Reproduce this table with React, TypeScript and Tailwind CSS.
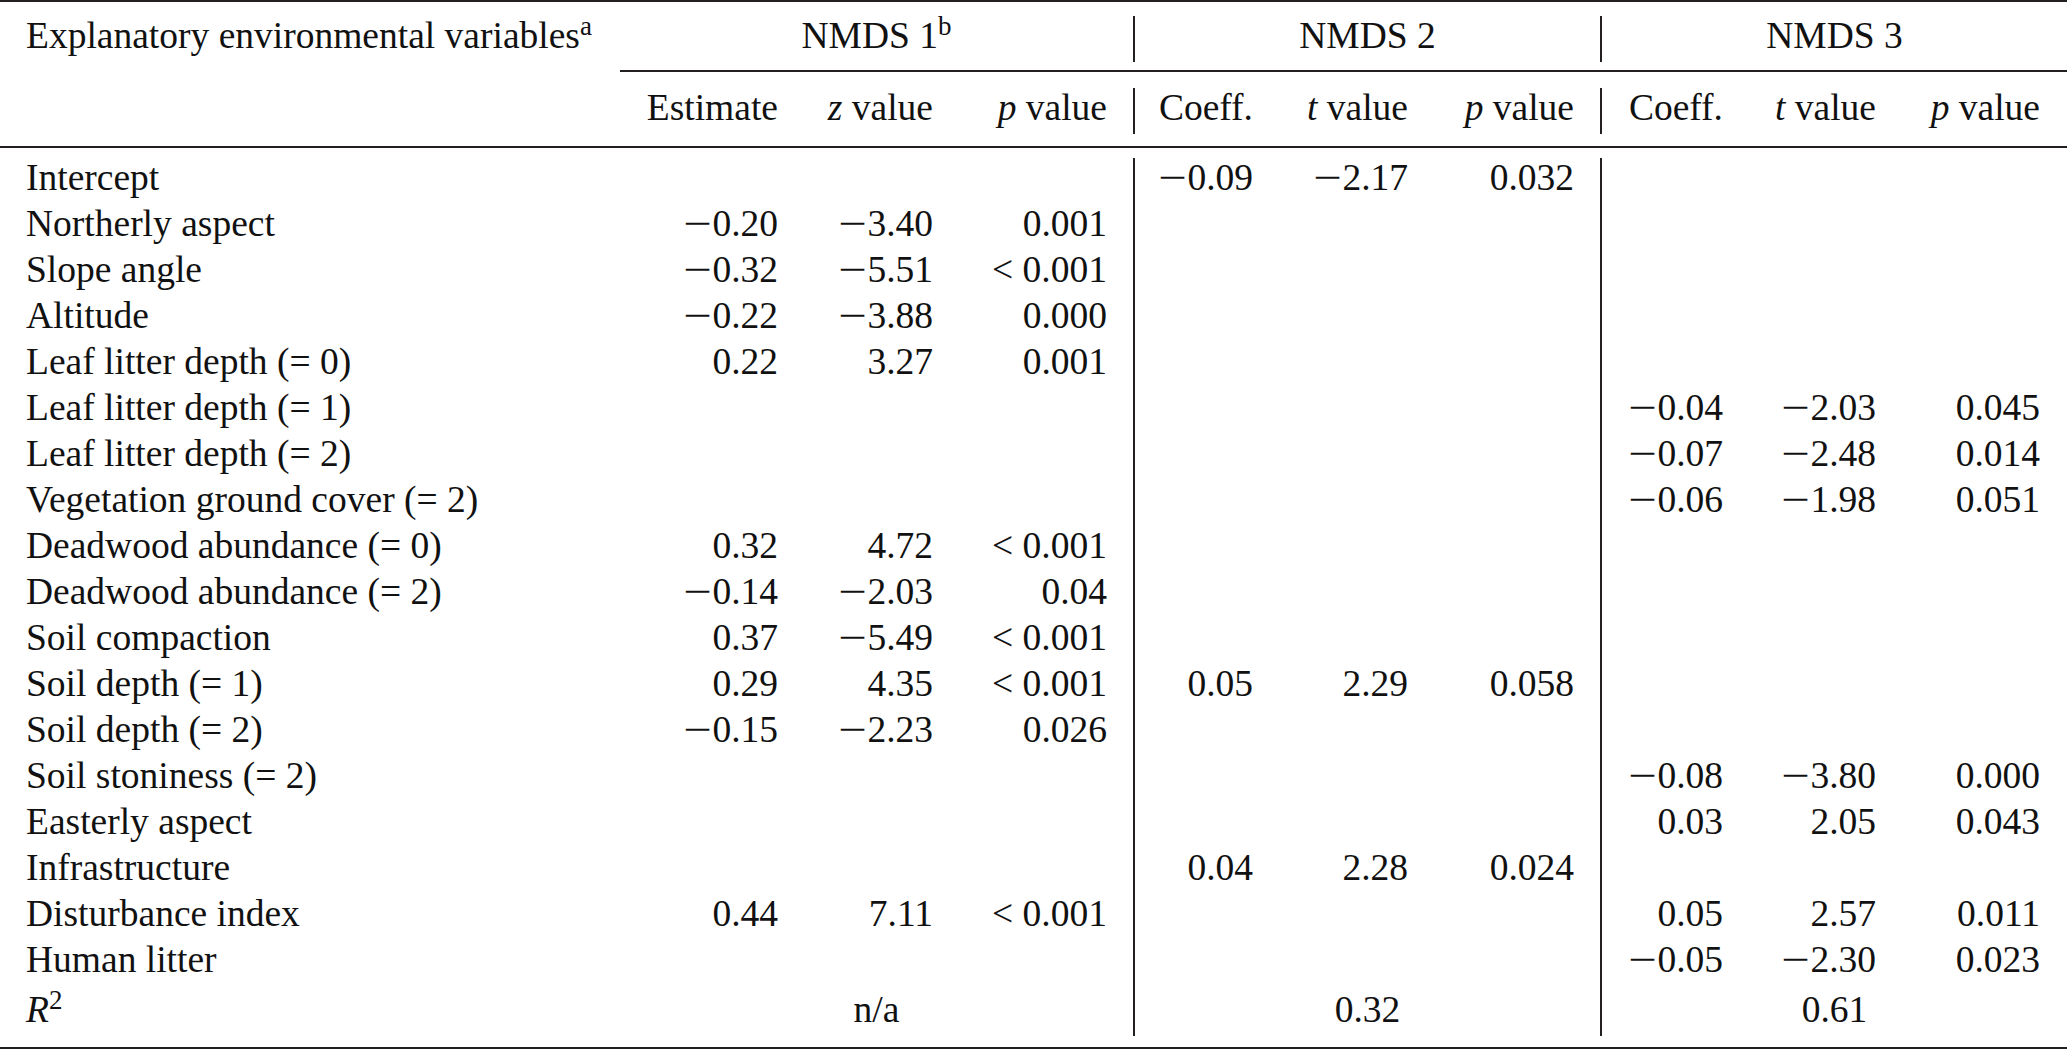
import React from "react";

const E = ["", "", ""];

type Row = { label: React.ReactNode; g: string[][] };

const rows: Row[] = [
  { label: "Intercept", g: [E, ["-0.09", "-2.17", "0.032"], E] },
  { label: "Northerly aspect", g: [["-0.20", "-3.40", "0.001"], E, E] },
  { label: "Slope angle", g: [["-0.32", "-5.51", "< 0.001"], E, E] },
  { label: "Altitude", g: [["-0.22", "-3.88", "0.000"], E, E] },
  { label: "Leaf litter depth (= 0)", g: [["0.22", "3.27", "0.001"], E, E] },
  { label: "Leaf litter depth (= 1)", g: [E, E, ["-0.04", "-2.03", "0.045"]] },
  { label: "Leaf litter depth (= 2)", g: [E, E, ["-0.07", "-2.48", "0.014"]] },
  { label: "Vegetation ground cover (= 2)", g: [E, E, ["-0.06", "-1.98", "0.051"]] },
  { label: "Deadwood abundance (= 0)", g: [["0.32", "4.72", "< 0.001"], E, E] },
  { label: "Deadwood abundance (= 2)", g: [["-0.14", "-2.03", "0.04"], E, E] },
  { label: "Soil compaction", g: [["0.37", "-5.49", "< 0.001"], E, E] },
  { label: "Soil depth (= 1)", g: [["0.29", "4.35", "< 0.001"], ["0.05", "2.29", "0.058"], E] },
  { label: "Soil depth (= 2)", g: [["-0.15", "-2.23", "0.026"], E, E] },
  { label: "Soil stoniness (= 2)", g: [E, E, ["-0.08", "-3.80", "0.000"]] },
  { label: "Easterly aspect", g: [E, E, ["0.03", "2.05", "0.043"]] },
  { label: "Infrastructure", g: [E, ["0.04", "2.28", "0.024"], E] },
  { label: "Disturbance index", g: [["0.44", "7.11", "< 0.001"], E, ["0.05", "2.57", "0.011"]] },
  { label: "Human litter", g: [E, E, ["-0.05", "-2.30", "0.023"]] },
];

const groupCols = [
  "grid grid-cols-[158px_155px_174px_26px]",
  "grid grid-cols-[118px_155px_166px_26px]",
  "grid grid-cols-[121px_153px_164px_27px]",
];
const groupW = ["w-[513px]", "w-[465px]", "w-[465px]"];
const r2 = ["n/a", "0.32", "0.61"];

function Num({ v }: { v: string }) {
  if (v.startsWith("-")) {
    return (
      <>
        <span className="inline-block scale-x-[1.35] mr-[4px]">{"\u2212"}</span>
        {v.slice(1)}
      </>
    );
  }
  return <>{v}</>;
}

function VLine() {
  return <div className="w-[2px] self-stretch bg-[#231f20] mt-[3px] -mb-[3px]" />;
}

function Group({ idx }: { idx: number }) {
  return (
    <div className={`${groupW[idx]} flex flex-col`}>
      {rows.map((r, i) => (
        <div key={i} className={`${groupCols[idx]} h-[46px]`}>
          {r.g[idx].map((v, j) => (
            <div key={j} className="text-right whitespace-pre">
              <Num v={v} />
            </div>
          ))}
          <div />
        </div>
      ))}
      <div className="h-[50px] pt-[4px] text-center">{r2[idx]}</div>
    </div>
  );
}

function SubHead({ idx, first }: { idx: number; first: string }) {
  return (
    <div className={`${groupW[idx]} ${groupCols[idx]} h-[46px]`}>
      <div className="text-right">{first}</div>
      <div className="text-right whitespace-pre">
        <i>{idx === 0 ? "z" : "t"}</i> value
      </div>
      <div className="text-right whitespace-pre">
        <i>p</i> value
      </div>
      <div />
    </div>
  );
}

export default function App() {
  return (
    <div
      className="w-[2067px] h-[1050px] bg-white text-[#111] text-[37.5px] leading-[46px] overflow-hidden"
      style={{ fontFamily: '"Liberation Serif", "Times New Roman", serif' }}
    >
      <div className="border-t-2 border-[#231f20]">
        {/* header row 1 */}
        <div className="flex">
          <div className="w-[620px] pl-[26px] pt-[11px] whitespace-nowrap">
            Explanatory environmental variables<sup className="text-[27px]">a</sup>
          </div>
          <div className="flex pt-[11px] pb-[11px] border-b-2 border-[#231f20]">
            <div className="w-[513px] h-[46px] text-center whitespace-nowrap">
              NMDS 1<sup className="text-[27px]">b</sup>
            </div>
            <VLine />
            <div className="w-[465px] h-[46px] text-center">NMDS 2</div>
            <VLine />
            <div className="w-[465px] h-[46px] text-center">NMDS 3</div>
          </div>
        </div>
        {/* header row 2 */}
        <div className="flex pt-[13px] pb-[15px] border-b-2 border-[#231f20]">
          <div className="w-[620px] h-[46px]" />
          <SubHead idx={0} first="Estimate" />
          <VLine />
          <SubHead idx={1} first="Coeff." />
          <VLine />
          <SubHead idx={2} first="Coeff." />
        </div>
        {/* body */}
        <div className="flex pt-[7px] pb-[14px] border-b-2 border-[#231f20]">
          <div className="w-[620px] pl-[26px] flex flex-col whitespace-nowrap">
            {rows.map((r, i) => (
              <div key={i} className="h-[46px]">
                {r.label}
              </div>
            ))}
            <div className="h-[50px] pt-[4px]">
              <i>R</i>
              <sup className="text-[27px]">2</sup>
            </div>
          </div>
          <Group idx={0} />
          <VLine />
          <Group idx={1} />
          <VLine />
          <Group idx={2} />
        </div>
      </div>
    </div>
  );
}
